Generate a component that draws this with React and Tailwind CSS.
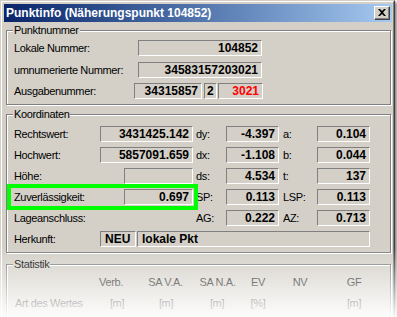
const FIELD = 'h-[16px] border-t border-l border-t-[#808080] border-l-[#808080] border-b border-r border-b-white border-r-white flex items-center text-[12px] font-bold leading-[14px]'
const LABEL = 'text-[11px] leading-[16px] tracking-[-0.35px] text-black whitespace-nowrap'
const GROUP = 'relative ml-[2px] mr-[1px] border border-[#808080] shadow-[inset_1px_1px_0_#fff,1px_1px_0_#fff]'

function Field({ w, children, red, align = 'right' }) {
  return (
    <div className={`${FIELD} ${w} ${align === 'right' ? 'justify-end pr-[3px]' : 'justify-start pl-[4px]'} ${red ? 'text-[#ff0000]' : 'text-black'}`}>
      {children}
    </div>
  )
}

function GroupLabel({ children }) {
  return (
    <span className="absolute -top-[7px] left-[6px] px-[1px] bg-[#d4d0c8] text-[11px] leading-[13px] tracking-[-0.35px] text-black">
      {children}
    </span>
  )
}

function CoordRow({ label, labelW, main, mainW, l2, v2, l3, v3, mt = 'mt-[5px]' }) {
  return (
    <div className={`flex h-[16px] ${mt}`}>
      <div className={`${LABEL} ${labelW} pl-[7px]`}>{label}</div>
      {mainW && <Field w={mainW}>{main}</Field>}
      <div className={`${LABEL} w-[33px] pl-[3px]`}>{l2}</div>
      <Field w="w-[53px]">{v2}</Field>
      <div className={`${LABEL} w-[38px] pl-[4px]`}>{l3}</div>
      <Field w="w-[53px]">{v3}</Field>
    </div>
  )
}

export default function App() {
  return (
    <div className="relative w-[397px] h-[317px] overflow-hidden bg-white font-['Liberation_Sans',Arial,sans-serif]">
      <div className="w-[395px] h-[340px] bg-[#d4d0c8] border border-t-[#d4d0c8] border-l-[#d4d0c8] border-r-[#404040] border-b-[#404040] shadow-[2px_2px_3px_rgba(0,0,0,0.5)]">
        <div className="h-full border border-t-white border-l-white border-r-[#808080] border-b-[#808080] pl-[2px] pr-[1px] pt-[2px]">
          {/* Title bar */}
          <div className="h-[18px] flex items-center justify-between bg-linear-to-r from-[#0a246a] to-[#a6caf0] pl-[2px] pr-[2px]">
            <span className="text-white font-bold text-[12px] leading-[18px] whitespace-nowrap">
              Punktinfo (Näherungspunkt 104852)
            </span>
            <div className="w-[16px] h-[14px] bg-[#d4d0c8] border-t border-l border-t-white border-l-white border-b border-r border-b-[#404040] border-r-[#404040] flex items-center justify-center shadow-[inset_-1px_-1px_0_#808080]">
              <svg width="8" height="7" viewBox="0 0 8 7" className="-mt-[1px]">
                <path d="M0 0h2l2 2 2-2h2L5 3.5 8 7H6L4 5 2 7H0l3-3.5z" fill="#000" />
              </svg>
            </div>
          </div>

          {/* Punktnummer */}
          <div className={`${GROUP} mt-[8px] h-[75px]`}>
            <GroupLabel>Punktnummer</GroupLabel>
            <div className="flex h-[16px] mt-[9px]">
              <div className={`${LABEL} w-[131px] pl-[7px]`}>Lokale Nummer:</div>
              <Field w="w-[124px]">104852</Field>
            </div>
            <div className="flex h-[16px] mt-[6px]">
              <div className={`${LABEL} w-[131px] pl-[7px]`}>umnumerierte Nummer:</div>
              <Field w="w-[124px]">34583157203021</Field>
            </div>
            <div className="flex h-[16px] mt-[5px]">
              <div className={`${LABEL} w-[127px] pl-[7px]`}>Ausgabenummer:</div>
              <Field w="w-[68px]">34315857</Field>
              <div className={`${FIELD} text-black w-[13px] ml-[2px] pl-[2px]`}>2</div>
              <div className="ml-[1px]">
                <Field w="w-[45px]" red>3021</Field>
              </div>
            </div>
          </div>

          {/* Koordinaten */}
          <div className={`${GROUP} mt-[9px] h-[139px]`}>
            <GroupLabel>Koordinaten</GroupLabel>
            <CoordRow mt="mt-[11px]" label="Rechtswert:" labelW="w-[93px]" main="3431425.142" mainW="w-[93px]" l2="dy:" v2="-4.397" l3="a:" v3="0.104" />
            <CoordRow label="Hochwert:" labelW="w-[93px]" main="5857091.659" mainW="w-[93px]" l2="dx:" v2="-1.108" l3="b:" v3="0.044" />
            <CoordRow label="Höhe:" labelW="w-[117px]" main="" mainW="w-[69px]" l2="ds:" v2="4.534" l3="t:" v3="137" />
            <CoordRow label="Zuverlässigkeit:" labelW="w-[117px]" main="0.697" mainW="w-[69px]" l2="SP:" v2="0.113" l3="LSP:" v3="0.113" />
            <CoordRow label="Lageanschluss:" labelW="w-[186px]" l2="AG:" v2="0.222" l3="AZ:" v3="0.713" />
            <div className="flex h-[16px] mt-[5px]">
              <div className={`${LABEL} w-[93px] pl-[7px]`}>Herkunft:</div>
              <Field w="w-[36px]" align="left">NEU</Field>
              <div className="ml-[1px]">
                <Field w="w-[233px]" align="left">lokale Pkt</Field>
              </div>
            </div>
            {/* highlight */}
            <div className="absolute left-0 top-[69px] w-[191px] h-[26px] border-4 border-[#00ff00]" />
          </div>

          {/* Statistik */}
          <div className={`${GROUP} mt-[11px] h-[80px]`}>
            <GroupLabel>Statistik</GroupLabel>
            <div className={`flex h-[16px] mt-[9px] ${LABEL}`}>
              <div className="w-[79px]" />
              <div className="w-[50px] text-center">Verb.</div>
              <div className="w-[59px] text-center">SA V.A.</div>
              <div className="w-[45px] text-center">SA N.A.</div>
              <div className="w-[36px] text-center">EV</div>
              <div className="w-[48px] text-center">NV</div>
              <div className="w-[60px] text-center">GF</div>
            </div>
            <div className={`flex h-[16px] mt-[5px] ${LABEL}`}>
              <div className="w-[85px] pl-[8px]">Art des Wertes</div>
              <div className="w-[50px] text-center">[m]</div>
              <div className="w-[48px] text-center">[m]</div>
              <div className="w-[54px] text-center">[m]</div>
              <div className="w-[28px] text-center">[%]</div>
              <div className="w-[54px]" />
              <div className="w-[56px] text-center">[m]</div>
            </div>
          </div>
        </div>
      </div>
      {/* fade-out */}
      <div className="absolute left-0 right-0 top-[248px] h-[69px] bg-linear-to-b from-white/0 to-white/95 pointer-events-none" />
    </div>
  )
}
